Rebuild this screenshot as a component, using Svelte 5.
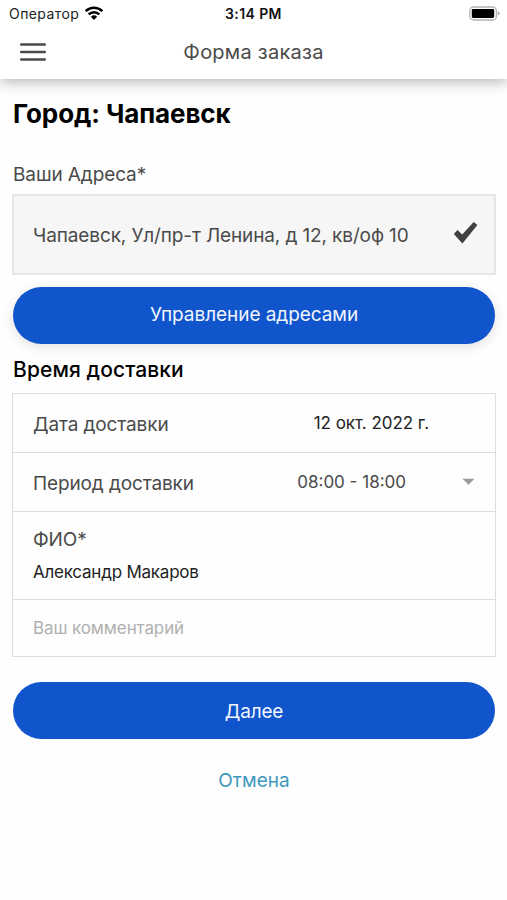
<script>
  const city = 'Чапаевск';
  const address = 'Чапаевск, Ул/пр-т Ленина, д 12, кв/оф 10';
  const date = '12 окт. 2022 г.';
  const period = '08:00 - 18:00';
  const name = 'Александр Макаров';
</script>

<div class="screen">
  <header>
    <div class="status">
      <div class="carrier">
        <span>Оператор</span>
        <svg class="wifi" width="18" height="14" viewBox="0 0 18 14">
          <g fill="none" stroke="#000" stroke-width="2.5">
            <path d="M0.7 5.1a11.7 11.7 0 0 1 16.6 0" />
            <path d="M3.7 8.4a7.4 7.4 0 0 1 10.6 0" />
          </g>
          <path d="M5.9 10.8a4.5 4.5 0 0 1 6.2 0L9 13.9z" fill="#000" />
        </svg>
      </div>
      <span class="clock">3:14 PM</span>
      <svg class="battery" width="32" height="16" viewBox="0 0 32 16">
        <rect x="0.8" y="1" width="26.6" height="13" rx="3.8" fill="#fff" stroke="#b3b3b3" stroke-width="1.3" />
        <rect x="2.8" y="3" width="22.4" height="9" rx="1.4" fill="#000" />
        <path d="M28.8 5.3q1.8.6 1.8 2.2t-1.8 2.2z" fill="#aaa" />
      </svg>
    </div>
    <div class="bar">
      <svg class="menu" width="26" height="20" viewBox="0 0 26 20">
        <path d="M1.2 2.5h23.6M1.2 10h23.6M1.2 17.5h23.6" stroke="#4a4a4a" stroke-width="2.4" stroke-linecap="round" />
      </svg>
      <span class="title">Форма заказа</span>
    </div>
  </header>

  <main>
    <h1>Город: {city}</h1>
    <div class="label">Ваши Адреса*</div>
    <div class="address">
      <span>{address}</span>
      <svg width="25" height="24" viewBox="0 0 25 24">
        <path d="M0.8 12.9L4.5 9.1L9.2 13.6L20.7 0.9L24.4 4L9.4 22.4z" fill="#404040" />
      </svg>
    </div>
    <button class="primary raised"><span class="manage">Управление адресами</span></button>
    <h2>Время доставки</h2>
    <div class="fields">
      <div class="row">
        <span class="key">Дата доставки</span>
        <span class="date">{date}</span>
      </div>
      <div class="row">
        <span class="key">Период доставки</span>
        <span class="period">{period}</span>
        <svg class="caret" width="13" height="8" viewBox="0 0 13 8"><path d="M0.5 0.8h12l-6 6z" fill="#9a9a9a" /></svg>
      </div>
      <div class="person">
        <span class="key">ФИО*</span>
        <span class="name">{name}</span>
      </div>
      <div class="comment">Ваш комментарий</div>
    </div>
    <button class="primary next"><span>Далее</span></button>
    <button class="cancel">Отмена</button>
  </main>
</div>

<style>
  :global(body) { margin: 0; background: #fff; }
  .screen {
    width: 507px;
    height: 900px;
    overflow: hidden;
    background: #fefefe;
    color: #4a4a4a;
    font-family: Inter, Roboto, "Liberation Sans", sans-serif;
    font-size: 19px;
    white-space: nowrap;
  }
  svg { display: block; flex: none; }
  header { height: 79px; background: #fff; box-shadow: 0 4px 12px rgba(0, 0, 0, 0.26); }
  .status {
    display: grid;
    grid-template-columns: 1fr auto 1fr;
    align-items: center;
    height: 27px;
    padding: 0 6px 0 9px;
    font-size: 14px;
    color: #222;
  }
  .carrier { display: flex; align-items: center; gap: 6px; letter-spacing: 0.42px; }
  .wifi { margin-top: -1px; }
  .clock { font-weight: 600; color: #111; letter-spacing: 0.4px; margin-left: -3px; }
  .battery { justify-self: end; margin-top: 1px; }
  .bar {
    display: grid;
    grid-template-columns: 1fr auto 1fr;
    align-items: center;
    height: 51px;
    padding: 0 20px;
  }
  .title { font-size: 20px; letter-spacing: 0.25px; margin-top: -1px; }
  .menu { margin-top: -1px; }
  main { display: flex; flex-direction: column; padding: 0 11px 0 12px; }
  h1 { margin: 19px 1px 0; font-size: 26px; line-height: 32px; font-weight: 700; letter-spacing: -0.1px; color: #000; }
  .label { margin: 33px 1px 0; line-height: 24px; letter-spacing: -0.1px; }
  .address {
    box-sizing: border-box;
    display: flex;
    align-items: center;
    justify-content: space-between;
    height: 81px;
    margin-top: 7px;
    padding: 2px 16px 0 19px;
    border: 2px solid #e6e6e6;
    background: #f6f6f6;
    letter-spacing: -0.12px;
  }
  .address svg { margin-top: -5px; }
  button { font: inherit; border: 0; padding: 0; }
  .primary {
    height: 57px;
    margin: 12px 1px 0;
    border-radius: 29px;
    background: #1055cc;
    color: #f1f6ff;
  }
  .primary.raised { padding-bottom: 2px; letter-spacing: -0.06px; }
  .raised { box-shadow: 0 3px 12px rgba(0, 0, 0, 0.12); }
  h2 { margin: 13px 1px 0; font-size: 21px; line-height: 26px; font-weight: 500; letter-spacing: 0.1px; color: #000; }
  .fields { margin-top: 10px; border: 1px solid #dedede; }
  .row { display: flex; align-items: center; height: 58px; padding: 0 20px; border-bottom: 1px solid #dedede; }
  .key { letter-spacing: -0.12px; }
  .row .key { padding-top: 2px; }
  .date { margin-left: auto; margin-right: 46px; font-size: 17px; letter-spacing: -0.04px; color: #222; }
  .period { margin-left: auto; margin-right: 56px; font-size: 17px; }
  .person {
    display: flex;
    flex-direction: column;
    height: 88px;
    box-sizing: border-box;
    padding: 16px 20px 0;
    border-bottom: 1px solid #dedede;
  }
  .person .key { line-height: 24px; }
  .name { margin-top: 8px; font-size: 17px; line-height: 24px; letter-spacing: -0.22px; color: #222; }
  .comment { height: 56px; line-height: 56px; padding-left: 20px; font-size: 17px; letter-spacing: -0.1px; color: #b0b0b0; }
  .next { margin-top: 25px; padding-top: 2px; letter-spacing: -0.2px; }
  .cancel { align-self: center; margin-top: 30px; line-height: 24px; background: none; color: #3f98bd; }
</style>
